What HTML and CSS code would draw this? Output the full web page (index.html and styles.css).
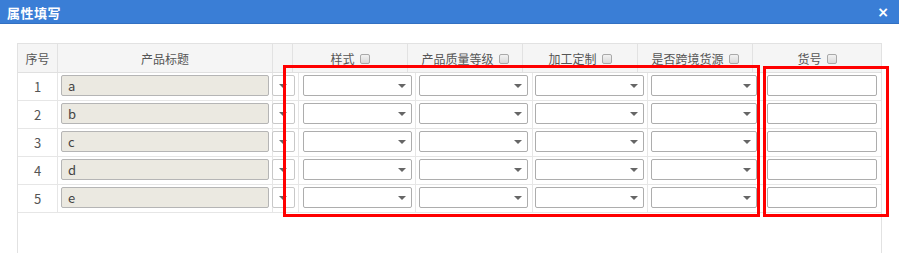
FILE: index.html
```html
<!DOCTYPE html>
<html lang="zh-CN">
<head>
  <meta charset="UTF-8">
  <title>属性填写</title>
  <link rel="stylesheet" href="styles.css">
</head>
<body>
  <div class="titlebar">
    <span class="title">属性填写</span>
    <span class="close">×</span>
  </div>

  <div class="grid">
    <!-- header -->
    <div class="head">
      <div class="th">序号</div>
      <div class="th">产品标题</div>
      <div class="th"></div>
      <div class="th">样式<span class="chk"></span></div>
      <div class="th">产品质量等级<span class="chk"></span></div>
      <div class="th">加工定制<span class="chk"></span></div>
      <div class="th">是否跨境货源<span class="chk"></span></div>
      <div class="th last">货号<span class="chk"></span></div>
    </div>

    <div class="row">
      <div class="td num">1</div>
      <div class="td"><div class="title-input">a</div></div>
      <div class="td narrow"><div class="sel mini"></div></div>
      <div class="td c4"><div class="sel"></div></div>
      <div class="td c5"><div class="sel"></div></div>
      <div class="td c6"><div class="sel"></div></div>
      <div class="td c7"><div class="sel short"></div></div>
      <div class="td last"><div class="txt"></div></div>
    </div>
    <div class="row">
      <div class="td num">2</div>
      <div class="td"><div class="title-input">b</div></div>
      <div class="td narrow"><div class="sel mini"></div></div>
      <div class="td c4"><div class="sel"></div></div>
      <div class="td c5"><div class="sel"></div></div>
      <div class="td c6"><div class="sel"></div></div>
      <div class="td c7"><div class="sel short"></div></div>
      <div class="td last"><div class="txt"></div></div>
    </div>
    <div class="row">
      <div class="td num">3</div>
      <div class="td"><div class="title-input">c</div></div>
      <div class="td narrow"><div class="sel mini"></div></div>
      <div class="td c4"><div class="sel"></div></div>
      <div class="td c5"><div class="sel"></div></div>
      <div class="td c6"><div class="sel"></div></div>
      <div class="td c7"><div class="sel short"></div></div>
      <div class="td last"><div class="txt"></div></div>
    </div>
    <div class="row">
      <div class="td num">4</div>
      <div class="td"><div class="title-input">d</div></div>
      <div class="td narrow"><div class="sel mini"></div></div>
      <div class="td c4"><div class="sel"></div></div>
      <div class="td c5"><div class="sel"></div></div>
      <div class="td c6"><div class="sel"></div></div>
      <div class="td c7"><div class="sel short"></div></div>
      <div class="td last"><div class="txt"></div></div>
    </div>
    <div class="row">
      <div class="td num">5</div>
      <div class="td"><div class="title-input">e</div></div>
      <div class="td narrow"><div class="sel mini"></div></div>
      <div class="td c4"><div class="sel"></div></div>
      <div class="td c5"><div class="sel"></div></div>
      <div class="td c6"><div class="sel"></div></div>
      <div class="td c7"><div class="sel short"></div></div>
      <div class="td last"><div class="txt"></div></div>
    </div>
  </div>

  <!-- annotation boxes drawn over the grid -->
  <div class="mark mark-attrs"></div>
  <div class="mark mark-code"></div>
</body>
</html>
```

FILE: styles.css
```css
body {
  margin: 0;
  background-color: #fff;
  font-family: "Microsoft YaHei", "Noto Sans CJK SC", "Liberation Sans", sans-serif;
  color: #555;
  height: 253px;
  overflow: hidden;
}

.titlebar {
  height: 24px;
  background-color: #3a7ed6;
  border-bottom: 1px solid #3270c2;
  box-sizing: border-box;
  display: flex;
  align-items: center;
  justify-content: space-between;
  padding: 1px 10px 0 7px;
  color: #fff;
}

.title {
  font-size: 13px;
  font-weight: bold;
  letter-spacing: 0.5px;
}

.close {
  font-family: "DejaVu Sans", sans-serif;
  font-size: 14px;
  font-weight: bold;
}

.grid {
  margin: 19px 0 0 17px;
  width: 865px;
  height: 210px;
  box-sizing: border-box;
  border: 1px solid #e2e2e2;
  border-bottom: none;
}

.head {
  display: grid;
  grid-template-columns: 40px 215px 20px 115px 115px 115px 115px 128px;
  height: 29px;
  background-color: #f5f5f5;
  border-bottom: 1px solid #e0e0e0;
  box-sizing: border-box;
}

.th {
  border-right: 1px solid #e2e2e2;
  display: flex;
  align-items: center;
  justify-content: center;
  gap: 5px;
  font-size: 12px;
  color: #555;
  padding-top: 1px;
}

.th.last {
  border-right: none;
}

.chk {
  width: 10px;
  height: 10px;
  box-sizing: border-box;
  border: 1px solid #a9a9a9;
  border-radius: 2px;
  background: linear-gradient(#f2f2f2, #d9d9d9);
}

.row {
  display: grid;
  grid-template-columns: 40px 215px 26px 117px 117px 115px 116px 117px;
  height: 28px;
}

.td {
  border-right: 1px solid #e6e6e6;
  border-bottom: 1px solid #e6e6e6;
  box-sizing: border-box;
  padding: 2px 0 0 3px;
  font-size: 13px;
}

.td.last {
  border-right: none;
}

.num {
  padding: 0;
  display: flex;
  align-items: center;
  justify-content: center;
  color: #555;
}

.title-input {
  width: 208px;
  height: 21px;
  box-sizing: border-box;
  border: 1px solid #b5b5b5;
  border-radius: 2px;
  background-color: #ebe9e1;
  padding-left: 6px;
  line-height: 19px;
  color: #444;
}

.sel {
  width: 109px;
  height: 21px;
  box-sizing: border-box;
  border: 1px solid #adadad;
  border-radius: 2px;
  background-color: #fff;
  display: flex;
  align-items: center;
  justify-content: flex-end;
  padding-right: 5px;
}

.sel::after {
  content: "";
  border-left: 4px solid transparent;
  border-right: 4px solid transparent;
  border-top: 4px solid #666;
}

.td.narrow {
  padding-left: 0;
}

.sel.mini {
  width: 23px;
  margin-left: -1px;
  padding-right: 7px;
  border-color: #c8c8c8;
}

.td.c4 {
  padding-left: 4px;
}

.td.c6 {
  padding-left: 2px;
}

.sel.short {
  width: 106px;
}

.txt {
  width: 110px;
  height: 21px;
  box-sizing: border-box;
  border: 1px solid #adadad;
  border-radius: 2px;
  background-color: #fff;
}

.mark {
  position: absolute;
  box-sizing: border-box;
  border: 3px solid #ff0000;
}

.mark-attrs {
  left: 283px;
  top: 65px;
  width: 477px;
  height: 152px;
}

.mark-code {
  left: 763px;
  top: 66px;
  width: 126px;
  height: 151px;
}
```
